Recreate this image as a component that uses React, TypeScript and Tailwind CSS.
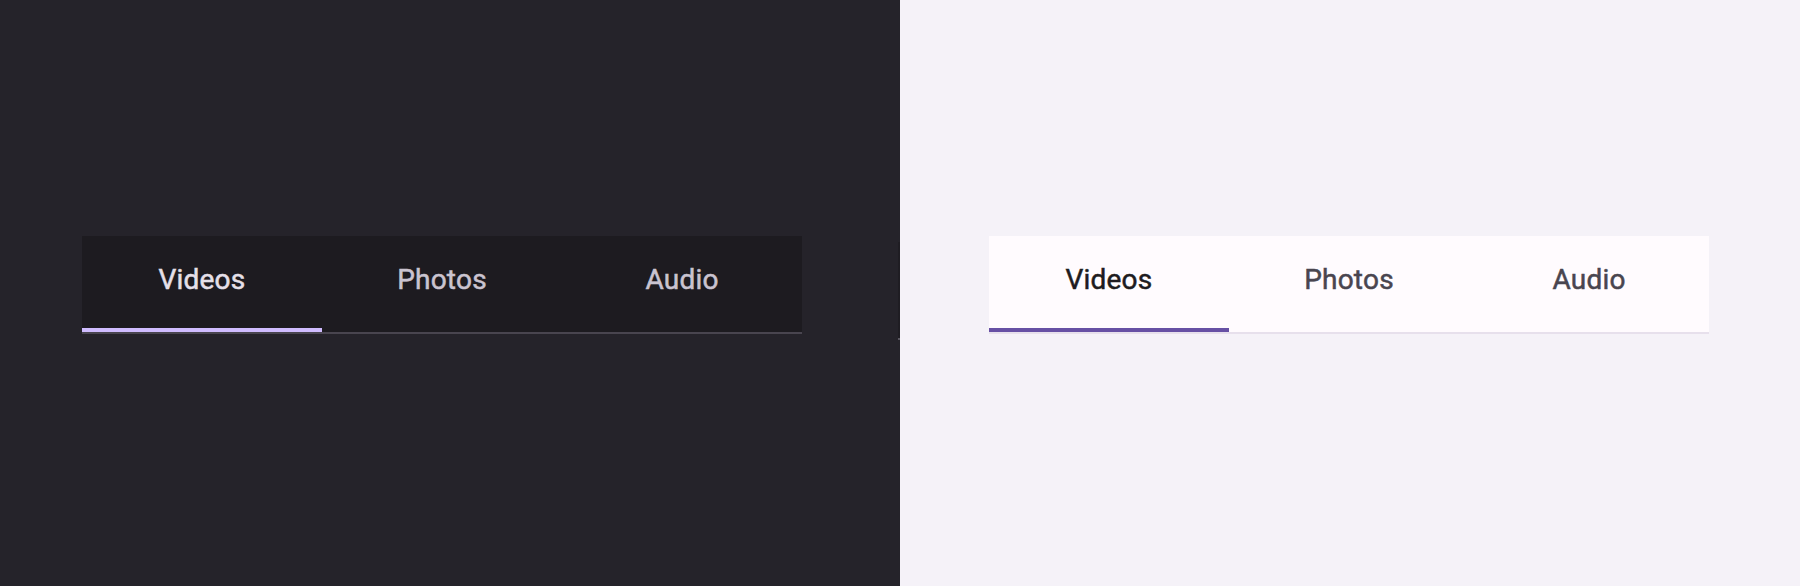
import { useState } from 'react';

const tabs = ['Videos', 'Photos', 'Audio'];

type Theme = {
    bar: string;
    active: string;
    inactive: string;
    indicator: string;
    divider: string;
};

const dark: Theme = {
    bar: 'bg-[#1d1b20]',
    active: 'text-[#e6e0e9]',
    inactive: 'text-[#cac4d0]',
    indicator: 'bg-[#d0bcff]',
    divider: 'bg-[#49454f]',
};

const light: Theme = {
    bar: 'bg-[#fffbfe]',
    active: 'text-[#1d1b20]',
    inactive: 'text-[#49454f]',
    indicator: 'bg-[#6750a4]',
    divider: 'bg-[#e7e0ec]',
};

const TabBar = ({ theme }: { theme: Theme }) => {
    const [selected, setSelected] = useState(0);

    return (
        <div className={`w-[720px] ${theme.bar}`}>
            <div className="flex">
                {tabs.map((tab, i) => (
                    <button
                        key={tab}
                        onClick={() => setSelected(i)}
                        className="relative flex h-[96px] flex-1 items-center justify-center pb-[8px]"
                    >
                        <span
                            className={`text-[28px] font-normal tracking-[0.2px] [-webkit-text-stroke:0.5px_currentColor] ${
                                selected === i ? theme.active : theme.inactive
                            }`}
                        >
                            {tab}
                        </span>
                        {selected === i && (
                            <span className={`absolute bottom-0 left-0 h-[4px] w-full ${theme.indicator}`} />
                        )}
                    </button>
                ))}
            </div>
            <div className={`h-[2px] ${theme.divider}`} />
        </div>
    );
};

const App = () => {
    return (
        <div className="flex h-[586px] w-[1800px] font-['Roboto',sans-serif]">
            <div className="flex w-[900px] bg-[#25232a]">
                <div className="flex-1 pl-[82px] pt-[236px]">
                    <TabBar theme={dark} />
                </div>
                <div className="mt-[242px] flex h-[98px] w-[2px] flex-col">
                    <div className="flex-1 bg-[#1f1d23]" />
                    <div className="h-[2px] bg-[#5a5760]" />
                </div>
            </div>
            <div className="w-[900px] bg-[#f5f2f8] pl-[89px] pt-[236px]">
                <TabBar theme={light} />
            </div>
        </div>
    );
};

export default App;
